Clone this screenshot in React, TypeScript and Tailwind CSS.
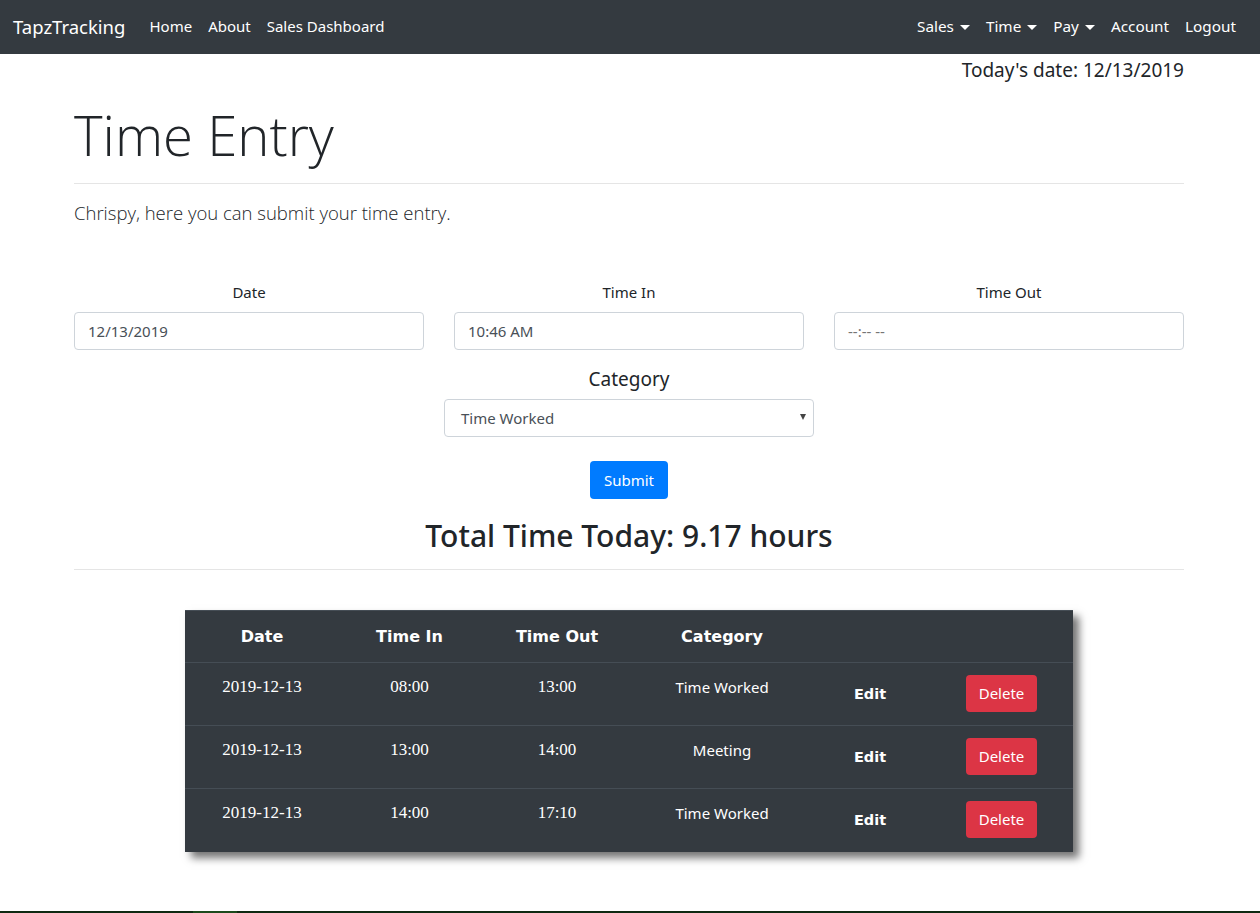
import React from "react";

const sans = { fontFamily: '"Noto Sans", "Open Sans", sans-serif' };
const light = { fontFamily: '"Open Sans", "Noto Sans", sans-serif' };

function Caret() {
  return (
    <span className="ml-[6px] inline-block h-0 w-0 border-x-[5px] border-t-[5px] border-x-transparent border-t-white align-middle" />
  );
}

const rows = [
  { date: "2019-12-13", tin: "08:00", tout: "13:00", cat: "Time Worked" },
  { date: "2019-12-13", tin: "13:00", tout: "14:00", cat: "Meeting" },
  { date: "2019-12-13", tin: "14:00", tout: "17:10", cat: "Time Worked" },
];

export default function App() {
  return (
    <div className="flex min-h-[913px] flex-col bg-white text-[#212529]" style={sans}>
      <nav className="flex h-[54px] items-center bg-[#343a40] px-[13px] pb-[1px] text-white">
        <span className="mr-[16px] text-[18.5px]">TapzTracking</span>
        <div className="flex text-[15px]">
          <span className="px-[8px]">Home</span>
          <span className="px-[8px]">About</span>
          <span className="px-[8px]">Sales Dashboard</span>
        </div>
        <div className="ml-auto mr-[3px] flex items-center text-[15.3px]">
          <span className="px-[8px]">Sales<Caret /></span>
          <span className="px-[8px]">Time<Caret /></span>
          <span className="px-[8px]">Pay<Caret /></span>
          <span className="px-[8px]">Account</span>
          <span className="px-[8px]">Logout</span>
        </div>
      </nav>

      <main className="ml-[59px] w-[1140px] flex-1 px-[15px]">
        <div className="pt-[4px] text-right text-[19px] leading-[24px]">Today's date: 12/13/2019</div>
        <h1 className="mt-[20px] text-[54.5px] font-light leading-[67px]" style={light}>Time Entry</h1>
        <hr className="mt-[14px] border-t border-[#e5e5e5]" />
        <p className="mt-[14px] text-[18.5px] font-light leading-[30px]" style={light}>Chrispy, here you can submit your time entry.</p>

        <div className="mt-[52px] grid grid-cols-3 gap-[30px]">
          {[
            { label: "Date", value: "12/13/2019", ph: false },
            { label: "Time In", value: "10:46 AM", ph: false },
            { label: "Time Out", value: "--:-- --", ph: true },
          ].map((f) => (
            <div key={f.label} className="flex flex-col">
              <div className="text-center text-[15px] leading-[24px]">{f.label}</div>
              <div className="mt-[8px] flex h-[38px] items-center rounded-[4px] border border-[#ced4da] px-[13px] text-[15px]">
                <span className={f.ph ? "text-[#757575]" : "text-[#495057]"}>{f.value}</span>
              </div>
            </div>
          ))}
        </div>

        <div className="mt-[14px] flex flex-col items-center">
          <div className="text-[19px] leading-[30px]">Category</div>
          <div className="relative mt-[5px] flex h-[38px] w-[370px] items-center rounded-[4px] border border-[#ced4da] px-[16px] text-[15px] text-[#495057]">
            Time Worked
            <span className="absolute right-[7px] top-[14px] h-0 w-0 border-x-[3.5px] border-t-[6px] border-x-transparent border-t-[#444]" />
          </div>
          <button className="mt-[24px] h-[38px] rounded-[4px] bg-[#007bff] px-[14px] text-[15px] text-white">Submit</button>
          <h2 className="mt-[18px] text-[30px] font-medium leading-[38px]">Total Time Today: 9.17 hours</h2>
        </div>
        <hr className="mt-[14px] border-t border-[#e5e5e5]" />

        <div className="mt-[40px] flex justify-center">
          <table className="w-[888px] bg-[#343a40] text-center text-white shadow-[6px_6px_8px_rgba(0,0,0,0.55)]">
            <thead>
              <tr className="h-[52px] border-t border-[#454d55]" style={{ fontFamily: '"DejaVu Sans", Verdana, sans-serif' }}>
                <th className="w-[154px] text-[16px] font-bold">Date</th>
                <th className="w-[141px] text-[16px] font-bold">Time In</th>
                <th className="w-[154px] text-[16px] font-bold">Time Out</th>
                <th className="w-[176px] text-[16px] font-bold">Category</th>
                <th className="w-[120px]"></th>
                <th></th>
              </tr>
            </thead>
            <tbody>
              {rows.map((r, i) => (
                <tr key={i} className="h-[63px] border-t border-[#454d55] align-top">
                  <td className="pt-[12px] text-[17px] leading-[24px]" style={{ fontFamily: '"Liberation Serif", serif' }}>{r.date}</td>
                  <td className="pt-[12px] text-[17px] leading-[24px]" style={{ fontFamily: '"Liberation Serif", serif' }}>{r.tin}</td>
                  <td className="pt-[12px] text-[17px] leading-[24px]" style={{ fontFamily: '"Liberation Serif", serif' }}>{r.tout}</td>
                  <td className="pt-[12px] text-[15px] leading-[24px]">{r.cat}</td>
                  <td className="pt-[12px]">
                    <span className="inline-block py-[7px] text-[14.5px] font-bold leading-[24px]" style={{ fontFamily: '"DejaVu Sans", Verdana, sans-serif' }}>Edit</span>
                  </td>
                  <td className="pt-[12px]">
                    <span className="inline-block h-[37px] rounded-[4px] bg-[#dc3545] px-[13px] text-[15px] leading-[37px]">Delete</span>
                  </td>
                </tr>
              ))}
            </tbody>
          </table>
        </div>
      </main>

      <div className="flex h-[2px] bg-[#0f2a12]">
        <div className="ml-[193px] w-[44px] bg-[#1c4a1c]" />
      </div>
    </div>
  );
}
